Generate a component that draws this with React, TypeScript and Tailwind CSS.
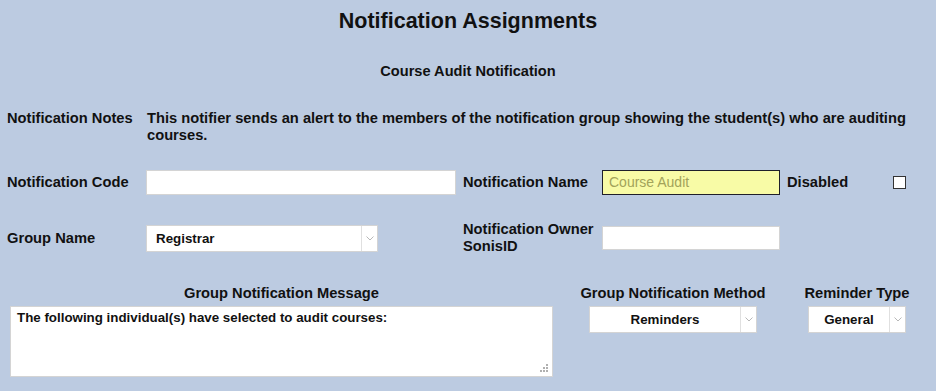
import React from "react";

function Chevron() {
  return (
    <svg width="8" height="5" viewBox="0 0 8 5" className="text-[#b8b8b8]">
      <path d="M0.5 0.5 L4 4 L7.5 0.5" fill="none" stroke="currentColor" strokeWidth="1" />
    </svg>
  );
}

function SelectBox({
  value,
  center = false,
  className = "",
}: {
  value: string;
  center?: boolean;
  className?: string;
}) {
  return (
    <div className={`flex border border-[#d4d4d4] bg-white ${className}`}>
      <div
        className={`flex flex-1 items-center text-[13.33px] font-bold text-[#111] ${
          center ? "justify-center" : "pl-[9px]"
        }`}
      >
        {value}
      </div>
      <div className="flex w-[16px] items-center justify-center border-l border-[#e0e0e0]">
        <Chevron />
      </div>
    </div>
  );
}

function ResizeGrip() {
  return (
    <svg width="9" height="9" viewBox="0 0 9 9" className="absolute right-[3px] bottom-[3px] text-[#b0b0b0]">
      <rect x="6" y="0" width="2" height="2" fill="currentColor" />
      <rect x="3" y="3" width="2" height="2" fill="currentColor" />
      <rect x="6" y="3" width="2" height="2" fill="currentColor" />
      <rect x="0" y="6" width="2" height="2" fill="currentColor" />
      <rect x="3" y="6" width="2" height="2" fill="currentColor" />
      <rect x="6" y="6" width="2" height="2" fill="currentColor" />
    </svg>
  );
}

export default function App() {
  return (
    <div className="min-h-[391px] w-full bg-[#bccbe1] font-['Liberation_Sans',Arial,sans-serif] text-[#111]">
      {/* Header */}
      <h1 className="pt-[9px] text-center text-[21.5px] leading-[25px] font-bold">
        Notification Assignments
      </h1>
      <h2 className="mt-[29px] text-center text-[14.6px] leading-[17px] font-bold">
        Course Audit Notification
      </h2>

      {/* Form grid */}
      <div className="mt-[30px] grid grid-cols-[139px_317px_139px_185px_106px_1fr] gap-y-[26px] pr-[10px] pl-[7px] text-[14.7px] leading-[17px] font-bold">
        <div>Notification Notes</div>
        <div className="col-span-5 pl-[1px]">
          This notifier sends an alert to the members of the notification group showing the
          student(s) who are auditing courses.
        </div>

        <div className="flex h-[25px] items-center">Notification Code</div>
        <div className="h-[25px] w-[310px] border border-[#d4d4d4] bg-white" />
        <div className="flex h-[25px] items-center">Notification Name</div>
        <div className="flex h-[25px] w-[178px] items-center border border-[#1f1f2a] bg-[#f8fba6] pl-[6px] text-[14px] font-normal text-[#a3a35a]">
          Course Audit
        </div>
        <div className="flex h-[25px] items-center">Disabled</div>
        <div className="flex h-[25px] items-center">
          <div className="h-[13px] w-[13px] border border-[#333] bg-white" />
        </div>

        <div className="flex h-[34px] items-center">Group Name</div>
        <div className="flex h-[34px] items-center">
          <SelectBox value="Registrar" className="h-[27px] w-[232px]" />
        </div>
        <div className="flex h-[34px] items-center">
          Notification Owner
          <br />
          SonisID
        </div>
        <div className="flex h-[34px] items-center">
          <div className="h-[24px] w-[178px] border border-[#d4d4d4] bg-white" />
        </div>
        <div />
        <div />
      </div>

      {/* Message + methods */}
      <div className="mt-[30px] flex pl-[10px] text-[14.7px] leading-[17px] font-bold">
        <div className="flex w-[543px] flex-col items-center">
          <div>Group Notification Message</div>
          <div className="relative mt-[4px] h-[71px] w-full border border-[#d4d4d4] bg-white px-[6px] pt-[3px] text-[13.33px] leading-[16px]">
            The following individual(s) have selected to audit courses:
            <ResizeGrip />
          </div>
        </div>
        <div className="ml-[27px] flex w-[186px] flex-col items-center">
          <div className="whitespace-nowrap">Group Notification Method</div>
          <SelectBox value="Reminders" center className="mt-[4px] h-[27px] w-[168px]" />
        </div>
        <div className="ml-[39px] flex w-[104px] flex-col items-center">
          <div className="whitespace-nowrap">Reminder Type</div>
          <SelectBox value="General" center className="mt-[4px] h-[27px] w-[98px]" />
        </div>
      </div>
    </div>
  );
}
